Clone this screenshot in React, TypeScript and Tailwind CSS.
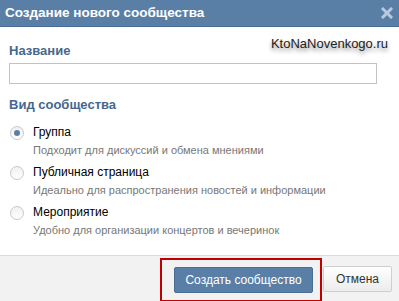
export default function App() {
  const options = [
    { title: 'Группа', desc: 'Подходит для дискуссий и обмена мнениями', checked: true },
    { title: 'Публичная страница', desc: 'Идеально для распространения новостей и информации', checked: false },
    { title: 'Мероприятие', desc: 'Удобно для организации концертов и вечеринок', checked: false },
  ];

  return (
    <div className="w-[399px] h-[301px] bg-white flex flex-col overflow-hidden font-['Liberation_Sans',sans-serif]">
      {/* Header */}
      <div className="h-[27px] bg-[#5a7fa6] border-b border-[#4a6d93] flex items-center pl-[5px] pr-[6px] shrink-0">
        <span className="text-white text-[13.5px] font-bold">Создание нового сообщества</span>
        <div className="flex-1" />
        <svg width="12" height="12" viewBox="0 0 12 12">
          <path d="M2 2 L10 10 M10 2 L2 10" stroke="#b9c9db" strokeWidth="3" strokeLinecap="square" />
        </svg>
      </div>

      {/* Body */}
      <div className="flex-1 flex flex-col px-[9px] pt-[16px] relative">
        <div className="absolute right-[11px] top-[9px] text-[13px] leading-[16px] text-[#222] [text-shadow:0_3px_4px_rgba(0,0,0,0.45)]">
          KtoNaNovenkogo.ru
        </div>
        <div className="text-[#45688e] text-[13px] font-bold leading-[16px]">Название</div>
        <div className="mt-[4px] w-[368px] h-[21px] border border-[#c3c3c3] bg-white" />
        <div className="mt-[12px] text-[#45688e] text-[13px] font-bold leading-[18px]">Вид сообщества</div>
        <div className="mt-[9px] flex flex-col gap-[4px] pl-[1px]">
          {options.map((o, i) => (
            <div key={i} className="flex items-start gap-[9px]">
              <div className="mt-[3px] w-[14px] h-[14px] rounded-full border border-[#c8c8c8] bg-gradient-to-b from-[#f0f0f0] to-white flex items-center justify-center">
                {o.checked && <div className="w-[6px] h-[6px] rounded-full bg-[#5a7fa6]" />}
              </div>
              <div className="flex flex-col leading-[18px]">
                <span className="text-black text-[12px]">{o.title}</span>
                <span className="text-[#777] text-[11px]">{o.desc}</span>
              </div>
            </div>
          ))}
        </div>
      </div>

      {/* Footer */}
      <div className="h-[46px] bg-[#f2f2f2] border-t border-[#dcdcdc] flex items-center justify-end pr-[7px] shrink-0">
        <div className="mt-[2px] border-2 border-[#c00000] pl-[12px] pr-[7px] py-[7px]">
          <button className="w-[139px] h-[26px] bg-[#5a7fa6] border border-[#4a6d93] rounded-[2px] text-white text-[12px]">
            Создать сообщество
          </button>
        </div>
        <button className="ml-[1px] w-[69px] h-[26px] bg-gradient-to-b from-white to-[#ececec] border border-[#cfcfcf] rounded-[2px] text-[#333] text-[12px]">
          Отмена
        </button>
      </div>
    </div>
  );
}
